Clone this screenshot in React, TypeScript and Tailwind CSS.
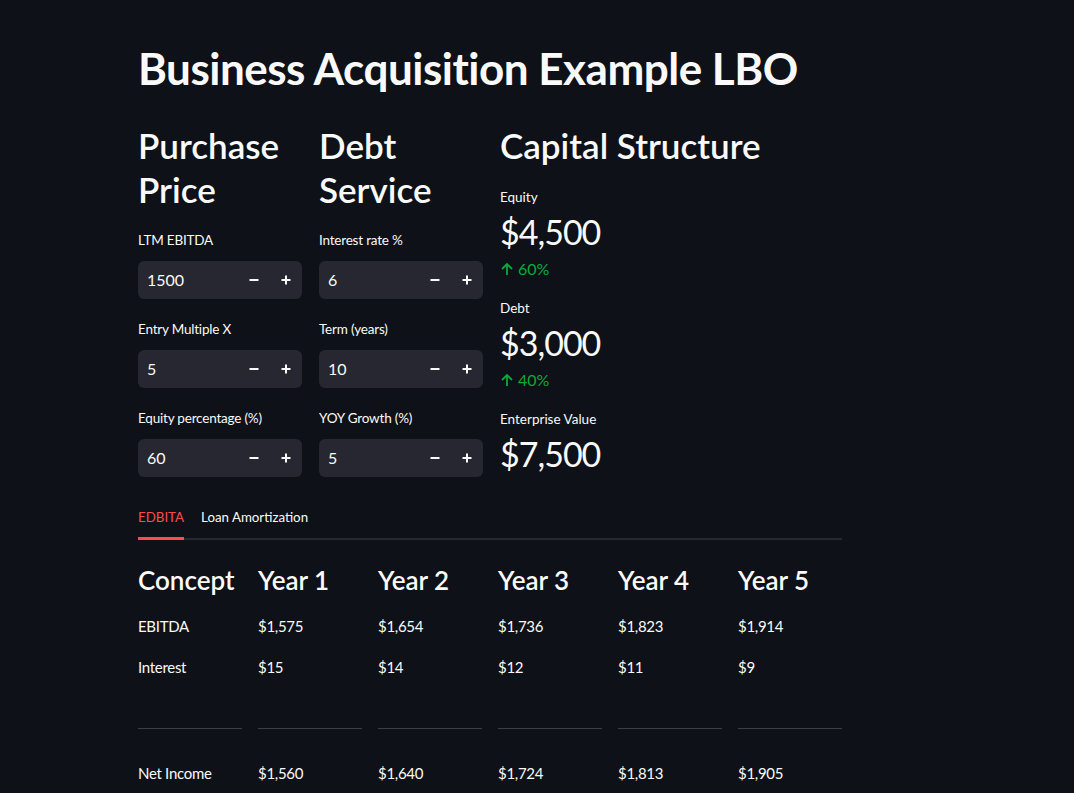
import React from "react";

const font = { fontFamily: "Lato, 'Noto Sans', sans-serif" };

type Field = { label: string; value: string };

const purchase: Field[] = [
  { label: "LTM EBITDA", value: "1500" },
  { label: "Entry Multiple X", value: "5" },
  { label: "Equity percentage (%)", value: "60" },
];

const debt: Field[] = [
  { label: "Interest rate %", value: "6" },
  { label: "Term (years)", value: "10" },
  { label: "YOY Growth (%)", value: "5" },
];

const metrics = [
  { label: "Equity", value: "$4,500", delta: "60%" },
  { label: "Debt", value: "$3,000", delta: "40%" },
  { label: "Enterprise Value", value: "$7,500" },
];

const headers = ["Concept", "Year 1", "Year 2", "Year 3", "Year 4", "Year 5"];
const ebitda = ["EBITDA", "$1,575", "$1,654", "$1,736", "$1,823", "$1,914"];
const interest = ["Interest", "$15", "$14", "$12", "$11", "$9"];
const netIncome = ["Net Income", "$1,560", "$1,640", "$1,724", "$1,813", "$1,905"];

const NumberInput = ({ label, value }: Field) => (
  <div className="flex flex-col">
    <label className="mb-[11px] text-[13.5px] leading-[20px] tracking-[-0.2px] text-[#fafafa]">{label}</label>
    <div className="flex h-[38px] items-center rounded-[6px] bg-[#262730]">
      <span className="flex-1 pl-[9px] text-[16px] text-[#fafafa]">{value}</span>
      <button className="flex h-full w-[32px] items-center justify-center text-[#fafafa]">
        <svg width="10" height="10" viewBox="0 0 10 10">
          <path d="M0.5 5h9" stroke="currentColor" strokeWidth="2" />
        </svg>
      </button>
      <button className="flex h-full w-[32px] items-center justify-center text-[#fafafa]">
        <svg width="10" height="10" viewBox="0 0 10 10">
          <path d="M0.5 5h9M5 0.5v9" stroke="currentColor" strokeWidth="2" />
        </svg>
      </button>
    </div>
  </div>
);

const InputColumn = ({ title, fields }: { title: string[]; fields: Field[] }) => (
  <div className="w-[164px]">
    <h2 className="pt-[7px] text-[35px] font-semibold leading-[44px] text-[#fafafa]">
      {title.map((t) => (
        <div key={t}>{t}</div>
      ))}
    </h2>
    <div className="mt-[19px] flex flex-col gap-[20px]">
      {fields.map((f) => (
        <NumberInput key={f.label} {...f} />
      ))}
    </div>
  </div>
);

const Row = ({ cells }: { cells: string[] }) => (
  <div className="grid grid-cols-6 gap-x-[16px]">
    {cells.map((c, i) => (
      <div key={i} className="text-[15px] leading-[24px] tracking-[-0.3px] text-[#fafafa]">
        {c}
      </div>
    ))}
  </div>
);

export default function App() {
  return (
    <div className="min-h-[793px] bg-[#0e1117] text-[#fafafa]" style={font}>
      <div className="mx-auto w-[704px] -translate-x-[47px] pt-[42px]">
        <h1 className="text-[44px] font-bold leading-[52px] tracking-[-0.5px]">
          Business Acquisition Example LBO
        </h1>

        <div className="mt-[22px] flex gap-[17px]">
          <InputColumn title={["Purchase", "Price"]} fields={purchase} />
          <InputColumn title={["Debt", "Service"]} fields={debt} />
          <div className="flex-1">
            <h2 className="pt-[7px] text-[35px] font-semibold leading-[44px]">Capital Structure</h2>
            <div className="mt-[20px] flex flex-col gap-[17px]">
              {metrics.map((m) => (
                <div key={m.label} className="flex flex-col">
                  <span className="text-[13.5px] leading-[20px]">{m.label}</span>
                  <span className="text-[34px] leading-[50px] tracking-[-1px]">{m.value}</span>
                  {m.delta && (
                    <span className="flex items-center gap-[4px] text-[16px] leading-[24px] text-[#09ab3b]">
                      <svg width="14" height="14" viewBox="0 0 14 14" fill="none">
                        <path d="M7 13V2M2 7l5-5 5 5" stroke="currentColor" strokeWidth="1.8" />
                      </svg>
                      {m.delta}
                    </span>
                  )}
                </div>
              ))}
            </div>
          </div>
        </div>

        <div className="mt-[28px]">
          <div className="relative flex gap-[17px] border-b-2 border-[#262730]">
            <div className="relative pb-[11px] text-[13.3px] leading-[20px] text-[#ff4b4b]">
              EDBITA
              <div className="absolute -bottom-[2px] left-0 right-0 h-[3px] bg-[#ff4b4b]" />
            </div>
            <div className="pb-[11px] text-[13.3px] leading-[20px]">Loan Amortization</div>
          </div>
        </div>

        <div className="mt-[23px] flex flex-col">
          <div className="grid grid-cols-6 gap-x-[16px]">
            {headers.map((h) => (
              <div key={h} className="text-[26px] font-semibold leading-[34px]">
                {h}
              </div>
            ))}
          </div>
          <div className="mt-[17px] flex flex-col gap-[17px]">
            <Row cells={ebitda} />
            <Row cells={interest} />
          </div>
          <div className="mt-[49px] grid grid-cols-6 gap-x-[16px]">
            {headers.map((h) => (
              <div key={h} className="h-px bg-[#3d3f46]" />
            ))}
          </div>
          <div className="mt-[32px]">
            <Row cells={netIncome} />
          </div>
        </div>
      </div>
    </div>
  );
}
